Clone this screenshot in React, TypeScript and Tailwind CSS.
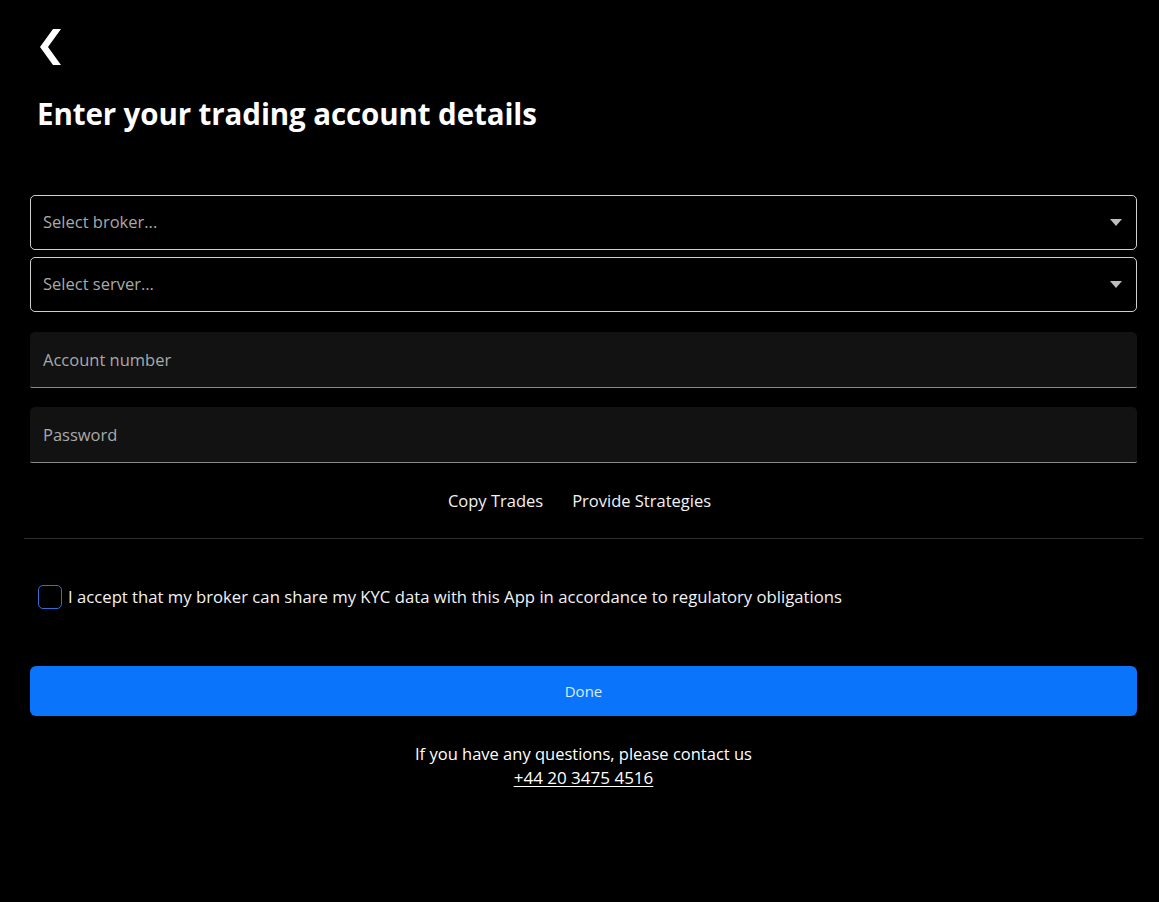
import React, { useState } from 'react';

const font = { fontFamily: '"Open Sans", "Noto Sans", sans-serif' };

const Caret = () => (
  <svg width="12" height="7" viewBox="0 0 12 7" className="shrink-0">
    <path d="M0 0 L12 0 L6 7 Z" fill="#bdbdbd" />
  </svg>
);

const SelectBox: React.FC<{ placeholder: string }> = ({ placeholder }) => (
  <div className="flex h-[55px] items-center justify-between rounded-[5px] border border-[#cfcfcf] bg-black pl-3 pr-[14px]">
    <span className="text-[16.5px] text-[#a9a9a9]">{placeholder}</span>
    <Caret />
  </div>
);

const TextField: React.FC<{ placeholder: string; type?: string }> = ({ placeholder, type = 'text' }) => (
  <input
    type={type}
    placeholder={placeholder}
    className="h-[56px] w-full rounded-t-[5px] rounded-b-[2px] border-b border-[#8a8a8a] bg-[#121212] px-[13px] text-[16.5px] text-white outline-none placeholder:text-[#a9a9a9]"
    style={font}
  />
);

export default function App() {
  const [accepted, setAccepted] = useState(false);

  return (
    <div className="min-h-[902px] w-full bg-black text-white" style={font}>
      <div className="pl-[38px] pt-[29px]">
        <svg width="23" height="36" viewBox="0 0 23 36">
          <path d="M15 0 L23 0 L10 18 L23 36 L15 36 L2 18 Z" fill="#ffffff" />
        </svg>
      </div>
      <h1 className="mt-[31px] pl-[37px] text-[29.5px] font-bold leading-[36px] tracking-[-0.1px]">
        Enter your trading account details
      </h1>

      <div className="mt-[63px] flex flex-col pl-[30px] pr-[22px]">
        <div className="flex flex-col gap-[7px]">
          <SelectBox placeholder="Select broker..." />
          <SelectBox placeholder="Select server..." />
        </div>
        <div className="mt-[20px] flex flex-col gap-[19px]">
          <TextField placeholder="Account number" />
          <TextField placeholder="Password" type="password" />
        </div>
      </div>

      <div className="mt-[24px] flex justify-center gap-[29px] text-[16.5px] leading-[28px] text-[#f2f2f2]">
        <span>Copy Trades</span>
        <span>Provide Strategies</span>
      </div>

      <div className="ml-[24px] mr-[16px] mt-[23px] h-px bg-[#2e2e2e]" />

      <div className="mt-[44px] flex items-center gap-[6px] pl-[38px]">
        <button
          onClick={() => setAccepted(!accepted)}
          className="flex h-[24px] w-[24px] items-center justify-center rounded-[5px] border border-[#2f6fd6] bg-black"
        >
          {accepted && <span className="text-[14px] text-white">✓</span>}
        </button>
        <span className="text-[16.7px] leading-[28px] text-[#f2f2f2]">
          I accept that my broker can share my KYC data with this App in accordance to regulatory obligations
        </span>
      </div>

      <div className="mt-[55px] pl-[30px] pr-[22px]">
        <button className="flex h-[50px] w-full items-center justify-center rounded-[6px] bg-[#0a75fb] text-[15px] text-[#d9ecff]">
          Done
        </button>
        <div className="mt-[26px] flex flex-col items-center text-[16.5px] leading-[24px] text-white">
          <span>If you have any questions, please contact us</span>
          <a href="#" className="text-[17px] underline underline-offset-2">
            +44 20 3475 4516
          </a>
        </div>
      </div>
    </div>
  );
}
